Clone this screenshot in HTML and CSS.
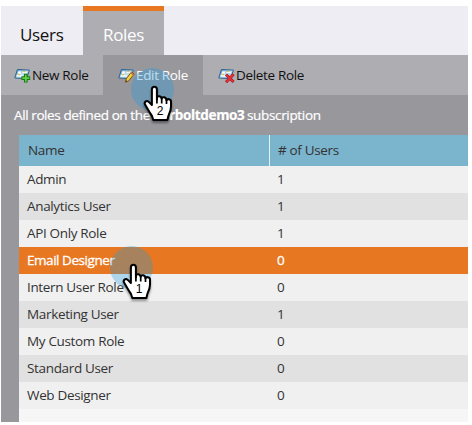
FILE: index.html
```html
<!DOCTYPE html>
<html lang="en">
<head>
<meta charset="utf-8">
<title>Roles</title>
<link rel="stylesheet" href="styles.css">
</head>
<body>
<svg class="defs" width="0" height="0" aria-hidden="true">
  <defs>
    <linearGradient id="card-fill" x1="0" y1="0" x2="1" y2="1">
      <stop offset="0" stop-color="#4d92c6"/><stop offset=".5" stop-color="#c4e2f2"/><stop offset="1" stop-color="#6dabd2"/>
    </linearGradient>
    <g id="card">
      <path d="M3.4 1.5 15.4 2.1 12.7 10.6.8 10Z" fill="url(#card-fill)" stroke="#2d618c" stroke-width="1"/>
      <path d="M4.5 3.3 7.2 3.4 6.5 5.9 3.8 5.8Z" fill="#fff"/>
      <path d="M8.5 4.4 12.8 4.6M3.2 7.8 9.5 8.1" stroke="#fff" stroke-width="1.4"/>
      <path d="M9.4 3.6h1.8M4.3 6.5h1.7" stroke="#e5bd3d" stroke-width="1.4"/>
    </g>
    <g id="hand">
      <path d="M13.2 13.5V3.4C13.2-.2 8.2-.2 8.2 3.4V19L5.1 15.9C2.8 13.9-.1 16.3 1.5 18.7L5.3 25.2C6.2 27 7.5 28.4 8.4 30.3L9.6 34H23.7L24.7 29.8C26.2 26.5 27.3 24.5 27.3 20.5V15.6C27.3 12.7 23.4 12.4 22.8 14.5 22.5 10.5 18.5 10.3 18 12.8 17.4 9.6 13.5 9.5 13.2 12Z" fill="#fff" stroke="#000" stroke-width="2" stroke-linejoin="round"/>
      <path d="M13.2 11.5V17.5M18 12.3V17.5M22.8 13.8V18" fill="none" stroke="#000" stroke-width="1.7"/>
    </g>
  </defs>
</svg>
<main class="panel">
  <nav class="tabs">
    <div class="tab users">Users</div>
    <div class="tab roles">Roles</div>
  </nav>
  <div class="toolbar">
    <div class="tool new">
      <svg class="icon" viewBox="0 0 17 15"><use href="#card"/><path d="M11.8 5.8V14.6M7.4 10.2H16.2" stroke="#187718" stroke-width="3.7"/><path d="M11.8 6.7V13.7M8.3 10.2H15.3" stroke="#62cf49" stroke-width="1.7"/></svg>
      <span>New Role</span>
    </div>
    <div class="tool edit">
      <svg class="icon" viewBox="0 0 17 15"><use href="#card"/><path d="M7.5 14.2 8.2 10.8 13.5 3.9 16.2 6.1 10.7 12.8Z" fill="#f4cf35" stroke="#80591b" stroke-width="1"/><path d="M13 4.7 15.5 6.8" stroke="#bb6654" stroke-width="1.4"/><path d="M7.5 14.2 8 12.1 9.2 13.2Z" fill="#333"/></svg>
      <span>Edit Role</span>
    </div>
    <div class="tool delete">
      <svg class="icon" viewBox="0 0 17 15"><use href="#card"/><path d="M8 6.5 15.6 14M15.6 6.3 8 14.2" stroke="#a71820" stroke-width="2.9"/><path d="M8.3 6.8 15.3 13.7M15.3 6.6 8.3 13.9" stroke="#e7333b" stroke-width="1.6"/></svg>
      <span>Delete Role</span>
    </div>
  </div>
  <div class="content">
    <p class="caption"><span class="lead">All roles defined on the</span><b>rboltdemo3</b><span class="tail">subscription</span></p>
    <div class="grid">
      <div class="row head"><div class="name">Name</div><div class="count">&#35; of Users</div></div>
      <div class="row"><div class="name">Admin</div><div class="count">1</div></div>
      <div class="row"><div class="name">Analytics User</div><div class="count">1</div></div>
      <div class="row"><div class="name">API Only Role</div><div class="count">1</div></div>
      <div class="row selected"><div class="name">Email Designer</div><div class="count">0</div></div>
      <div class="row"><div class="name">Intern User Role</div><div class="count">0</div></div>
      <div class="row"><div class="name">Marketing User</div><div class="count">1</div></div>
      <div class="row"><div class="name">My Custom Role</div><div class="count">0</div></div>
      <div class="row"><div class="name">Standard User</div><div class="count">0</div></div>
      <div class="row"><div class="name">Web Designer</div><div class="count">0</div></div>
    </div>
  </div>
</main>
<svg class="pointer step-two" viewBox="0 0 52 60"><circle cx="21.5" cy="21.5" r="21.5"/><use href="#hand" x="12.7" y="18"/><text x="29" y="47">2</text></svg>
<svg class="pointer step-one" viewBox="0 0 52 60"><circle cx="21.5" cy="21.5" r="21.5"/><use href="#hand" x="12.7" y="18"/><text x="29.2" y="46.5">1</text></svg>
</body>
</html>
```

FILE: styles.css
```css
* { box-sizing: border-box; }
body {
  margin: 0;
  width: 472px;
  height: 425px;
  overflow: hidden;
  background: #fff;
  color: #333;
  font: 13.5px/20px "Open Sans", sans-serif;
  letter-spacing: -.34px;
  white-space: nowrap;
}
.defs { position: absolute; }
.panel { margin: 0 0 0 1px; padding-top: 6px; width: 467px; height: 422px; display: flex; flex-direction: column; }
.tabs { display: flex; height: 49px; background: #ededf3; color: #111; font-size: 17px; }
.tab { padding-top: 17px; line-height: 24px; }
.users { width: 82px; padding-left: 19px; }
.roles { width: 81px; padding: 12px 0 0 20px; border-top: 5px solid #e87722; background: #aeadb2; color: #fff; }
.toolbar { display: flex; height: 40px; background: #aeadb2; color: #111; }
.tool { display: flex; align-items: center; gap: 1px; padding: 0 0 0 13px; }
.icon { width: 17px; height: 15px; flex: none; margin-top: 1px; }
.new { width: 102px; }
.edit { width: 100px; padding-left: 15px; background: #98979c; color: #fff; }
.delete { padding-left: 15px; }
.content { flex: 1; padding-left: 18px; background: #98979c; }
.caption { display: flex; margin: 0 0 0 -5px; height: 40px; line-height: 40px; color: #fff; -webkit-text-stroke: .2px #fff; }
.lead { width: 155px; letter-spacing: -.4px; }
.caption b { width: 78px; }
.grid { height: 287px; background: #f6f6f6; }
.row { display: flex; height: 27px; line-height: 26px; background: #f0f0f0; }
.row:nth-child(odd) { background: #e1e1e1; }
.row.head { height: 31px; line-height: 31px; background: #7bb4cd; }
.row.selected { background: #e87722; color: #fff; -webkit-text-stroke: .3px #fff; }
.selected .name { letter-spacing: -.45px; }
.name { width: 250px; padding-left: 8px; }
.count { padding-left: 8px; }
.head .name { width: 251px; padding-left: 9px; border-right: 1px solid #e4f0f5; }
.pointer { position: absolute; width: 52px; height: 60px; overflow: visible; }
.step-two { left: 131px; top: 68px; }
.step-one { left: 110px; top: 246px; }
.pointer circle { fill: rgba(30, 155, 225, .32); }
.pointer use { filter: drop-shadow(0 2px 1px rgba(0, 0, 0, .4)); }
.pointer text { font: 12px "Liberation Sans", sans-serif; letter-spacing: 0; text-anchor: middle; fill: #000; }
```
